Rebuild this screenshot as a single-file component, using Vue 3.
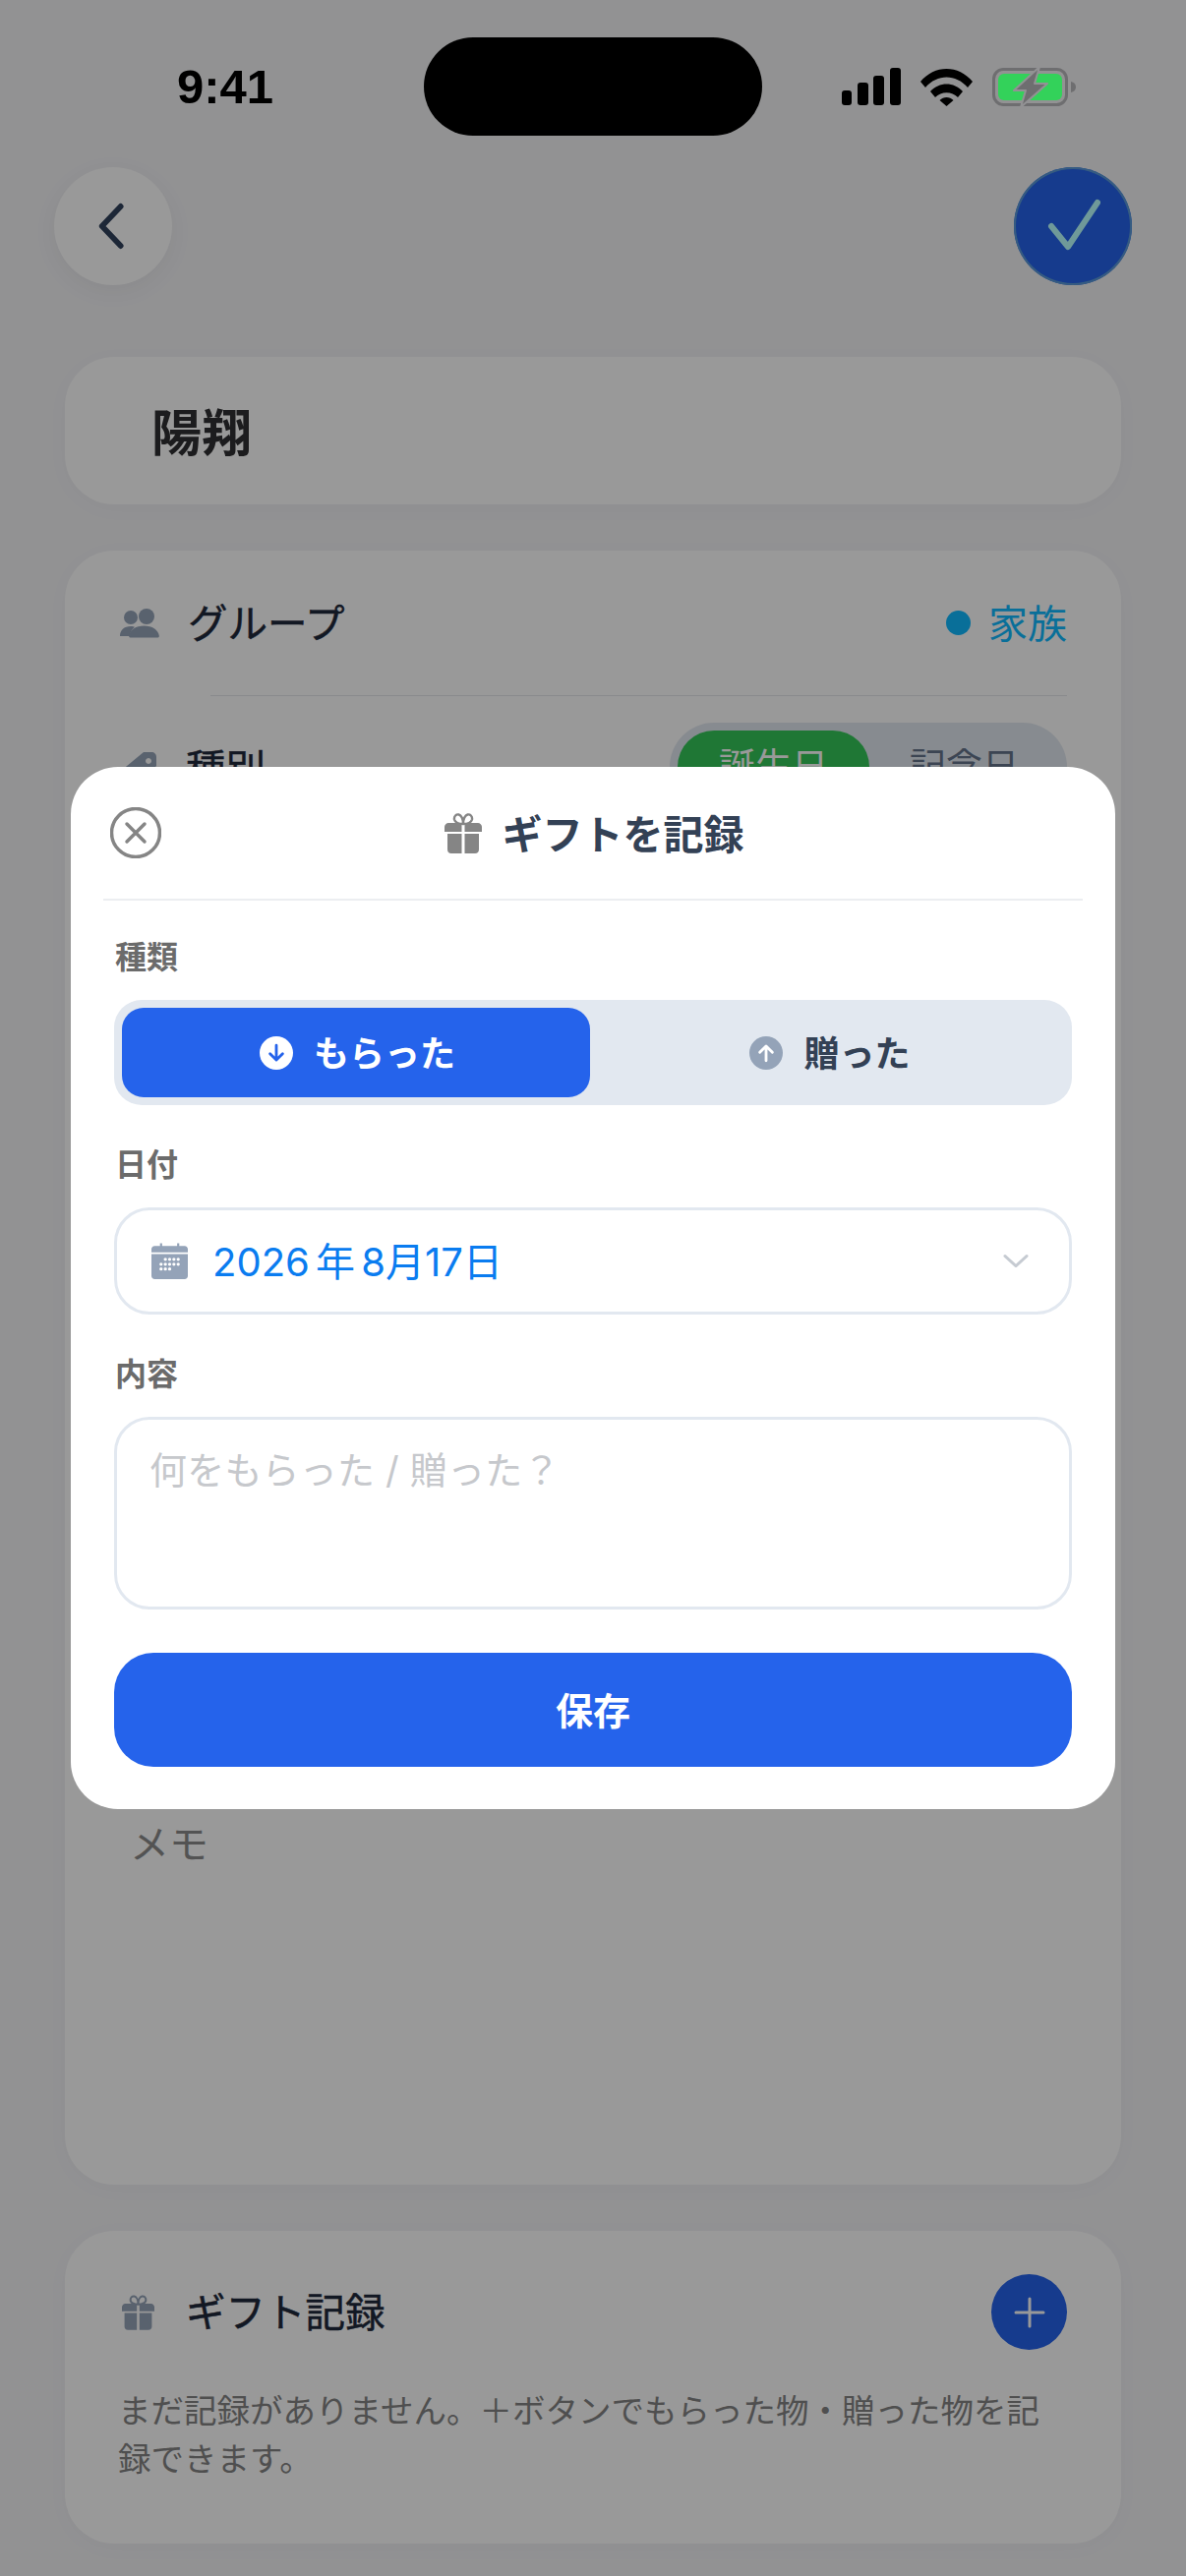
<script setup>
import { ref } from 'vue'

const giftType = ref('received')
const giftTypes = [
  { val: 'received', label: 'もらった', arrow: 'M12 6.5v10M7.5 12.5l4.5 4.5 4.5-4.5' },
  { val: 'sent', label: '贈った', arrow: 'M12 17.5v-10M7.5 11.5 12 7l4.5 4.5' }
]
const calendarDots = [
  [13, 15.5], [17, 15.5], [21, 15.5], [25, 15.5],
  [9, 20], [13, 20], [17, 20], [21, 20], [25, 20],
  [9, 24.5], [13, 24.5], [17, 24.5]
]
</script>

<template>
  <div class="phone">
    <div class="status">
      <span class="time">9:41</span>
      <div class="island"></div>
      <div class="status-icons">
        <svg width="60" height="38" viewBox="0 0 60 38">
          <rect x="0" y="23" width="10" height="15" rx="3" />
          <rect x="16" y="15" width="11" height="23" rx="3" />
          <rect x="32" y="8" width="11" height="30" rx="3" />
          <rect x="49" y="0" width="11" height="38" rx="3" />
        </svg>
        <svg width="53" height="39" viewBox="0 0 53 39">
          <path d="M0 14C14-3.500 39-3.500 53 14l-5 6C36 6 17 6 5 20z" />
          <path d="M10 24c9-10 24-10 33 0l-5 6c-6-6.500-17-6.500-23 0z" />
          <path d="M19.500 33c4-4 10-4 14 0l-7 6z" />
        </svg>
        <svg width="85" height="41" viewBox="0 0 85 41">
          <rect x="1.500" y="2.500" width="74" height="36" rx="10" fill="none" stroke="#6e6e70" stroke-width="3" />
          <rect x="6" y="7" width="65" height="27" rx="6" fill="#33d25a" />
          <path d="M80 15c3 .6 5 2.500 5 5.500s-2 4.900-5 5.500z" fill="#6e6e70" />
          <path d="M48 0 22 24h12l-5 17 27-24H43z" fill="#6e6e70" stroke="#929294" stroke-width="2" stroke-linejoin="round" />
        </svg>
      </div>
    </div>

    <div class="nav">
      <button class="nav-btn back">
        <svg width="30" height="48" viewBox="0 0 30 48">
          <path d="M26 4 6 24l0 0 20 20" transform="matrix(.95 0 0 1 1 0)" fill="none" stroke="#31415c" stroke-width="6" stroke-linecap="round" stroke-linejoin="round" />
        </svg>
      </button>
      <button class="nav-btn confirm">
        <svg width="56" height="56" viewBox="0 0 56 56">
          <path d="M6 28l17 21L53 4" fill="none" stroke="#b9ffff" stroke-width="6" stroke-linecap="round" stroke-linejoin="round" />
        </svg>
      </button>
    </div>

    <div class="cards">
      <div class="card name-card">陽翔</div>

      <div class="card detail-card">
        <div class="row">
          <svg class="row-icon" width="40" height="30" viewBox="0 0 40 30">
            <circle cx="11" cy="9" r="7" />
            <circle cx="27" cy="8" r="8" />
            <path d="M0 28c0-6 4-10 11-10 2 0 3 .3 4 .8-3 2.500-5 6-5 9.200z" />
            <path d="M13 30c-1 0-1.500-.8-1.300-2 1-6 7-10 15.300-10s14.300 4 15.300 10c.2 1.200-.3 2-1.300 2z" transform="translate(-2.500 -.500)" />
          </svg>
          <span class="row-label">グループ</span>
          <span class="group-value"><i class="dot"></i><span class="group-name">家族</span></span>
        </div>
        <div class="row-line"></div>
        <div class="row kind-row">
          <svg class="row-icon" width="38" height="38" viewBox="0 0 38 38">
            <path d="M24 2h8c3 0 5 2 5 5v9L17 36 1 21z M29 8a3 3 0 1 0 .01 0z" fill-rule="evenodd" />
          </svg>
          <span class="row-label">種別</span>
          <div class="kind-switch">
            <span class="kind active">誕生日</span>
            <span class="kind">記念日</span>
          </div>
        </div>
        <div class="memo">メモ</div>
      </div>

      <div class="card gift-card">
        <div class="gift-head">
          <svg class="row-icon" width="33" height="36" viewBox="0 0 38 41">
            <path d="M19 11C15 11 11 10 10 6.500 9.500 3 12 1 14.500 1.500 17 2 19 6 19 11zM19 11c4 0 8-1 9-4.500C28.500 3 26 1 23.500 1.500 21 2 19 6 19 11z" fill="none" stroke="currentColor" stroke-width="2.400" />
            <path d="M4 10h13.500v9H0v-5c0-2 2-4 4-4zM20.500 10H34c2 0 4 2 4 4v5H20.500zM3 21h14.500v20H7c-2.500 0-4-1.500-4-4zM20.500 21H35v16c0 2.500-1.500 4-4 4H20.500z" />
          </svg>
          <span class="row-label">ギフト記録</span>
          <button class="add-btn">
            <svg width="34" height="34" viewBox="0 0 34 34">
              <path d="M17 3v28M3 17h28" fill="none" stroke="#fff" stroke-width="3" stroke-linecap="round" />
            </svg>
          </button>
        </div>
        <p class="gift-empty">まだ記録がありません。＋ボタンでもらった物・贈った物を記録できます。</p>
      </div>
    </div>

    <div class="overlay">
      <div class="modal">
        <div class="modal-head">
          <button class="close">
            <svg width="52" height="52" viewBox="0 0 52 52">
              <circle cx="26" cy="26" r="24.500" fill="none" stroke="#858585" stroke-width="3.500" />
              <path d="M17 17l18 18M35 17 17 35" fill="none" stroke="#858585" stroke-width="3.500" stroke-linecap="round" />
            </svg>
          </button>
          <div class="modal-title">
            <svg width="38" height="41" viewBox="0 0 38 41" fill="#858585">
              <path d="M19 11C15 11 11 10 10 6.500 9.500 3 12 1 14.500 1.500 17 2 19 6 19 11zM19 11c4 0 8-1 9-4.500C28.500 3 26 1 23.500 1.500 21 2 19 6 19 11z" fill="none" stroke="#858585" stroke-width="2.400" />
              <path d="M4 10h13.500v9H0v-5c0-2 2-4 4-4zM20.500 10H34c2 0 4 2 4 4v5H20.500zM3 21h14.500v20H7c-2.500 0-4-1.500-4-4zM20.500 21H35v16c0 2.500-1.500 4-4 4H20.500z" />
            </svg>
            <span>ギフトを記録</span>
          </div>
        </div>

        <div class="modal-body">
          <div class="field-label first">種類</div>
          <div class="segment">
            <button
              v-for="t in giftTypes"
              :key="t.val"
              :class="['segment-item', { active: giftType === t.val }]"
              @click="giftType = t.val"
            >
              <svg class="segment-icon" width="34" height="34" viewBox="0 0 24 24">
                <circle cx="12" cy="12" r="12" class="segment-disc" />
                <path :d="t.arrow" class="segment-arrow" />
              </svg>
              <span>{{ t.label }}</span>
            </button>
          </div>

          <div class="field-label">日付</div>
          <div class="date-field">
            <svg width="37" height="37" viewBox="0 0 34 34" fill="#94a3b8">
              <path d="M3 3h5V0.500h2V3h14V0.500h2V3h5c1.700 0 3 1.300 3 3v3H0V6c0-1.700 1.300-3 3-3z" />
              <path d="M0 10.500h34V31c0 1.700-1.300 3-3 3H3c-1.700 0-3-1.300-3-3z" />
              <circle v-for="(d, i) in calendarDots" :key="i" :cx="d[0]" :cy="d[1]" r="1.500" fill="#fff" />
            </svg>
            <span class="date-text">2026 年 8月17日</span>
            <svg class="chevron" width="26" height="15" viewBox="0 0 28 15">
              <path d="M2 2l12 11L26 2" fill="none" stroke="#c6cbd2" stroke-width="3" stroke-linecap="round" stroke-linejoin="round" />
            </svg>
          </div>

          <div class="field-label">内容</div>
          <div class="memo-field">何をもらった / 贈った？</div>

          <button class="save">保存</button>
        </div>
      </div>
    </div>
  </div>
</template>

<style>
html, body {
  margin: 0;
  background: #f3f3f6;
}
</style>

<style scoped>
.phone {
  position: relative;
  width: 1206px;
  height: 2620px;
  overflow: hidden;
  background: #f3f3f6;
  font-family: Inter, "Noto Sans CJK JP", sans-serif;
  color: #1e293b;
}
button {
  border: 0;
  padding: 0;
  background: none;
  font: inherit;
}

.status {
  position: relative;
  z-index: 3;
  display: grid;
  grid-template-columns: 431px 344px 1fr;
  align-items: center;
  height: 100px;
  padding-top: 38px;
}
.time {
  padding-left: 180px;
  font-size: 49px;
  font-weight: 600;
  font-family: "Liberation Sans", sans-serif;
  color: #000;
}
.island {
  height: 100px;
  border-radius: 50px;
  background: #000;
}
.status-icons {
  display: flex;
  align-items: center;
  gap: 20px;
  padding-left: 81px;
}

.nav {
  display: flex;
  justify-content: space-between;
  padding: 32px 55px 0;
}
.nav-btn {
  display: flex;
  align-items: center;
  justify-content: center;
  width: 120px;
  height: 120px;
  border-radius: 50%;
}
.back {
  background: #fff;
  box-shadow: 0 6px 24px rgba(0, 0, 0, 0.05);
}
.back svg {
  margin-right: 6px;
}
.confirm {
  background: #2563eb;
  box-shadow: inset 0 0 0 2px #5b9ad8;
}

.cards {
  display: flex;
  flex-direction: column;
  gap: 47px;
  padding: 73px 66px 0;
}
.card {
  border-radius: 50px;
  background: #fff;
  box-shadow: 0 4px 30px rgba(0, 0, 0, 0.02);
}
.name-card {
  display: flex;
  align-items: center;
  height: 150px;
  padding: 0 0 3px 88px;
  box-sizing: border-box;
  font-size: 51px;
  font-weight: 700;
  color: #303032;
}
.detail-card {
  height: 1662px;
}
.row {
  display: flex;
  align-items: center;
  height: 147px;
  padding: 0 55px 0 56px;
}
.row-icon {
  flex: none;
  fill: #94a3b8;
  color: #94a3b8;
}
.row-label {
  margin-left: 29px;
  padding-bottom: 5px;
  font-size: 40.500px;
  -webkit-text-stroke: 0.5px #1e293b;
}
.group-value {
  display: flex;
  align-items: center;
  margin-left: auto;
  font-size: 40px;
  color: #10baff;
}
.group-name {
  padding-bottom: 4px;
}
.dot {
  width: 25px;
  height: 25px;
  margin-right: 18px;
  border-radius: 50%;
  background: #10baff;
}
.row-line {
  height: 1px;
  margin: 0 55px 0 148px;
  background: #e5e7eb;
}
.kind-switch {
  display: flex;
  align-self: flex-start;
  width: 404px;
  height: 90px;
  margin: 27px 0 0 auto;
  padding: 8px;
  box-sizing: border-box;
  border-radius: 45px;
  background: #e2e8f0;
  font-size: 37px;
  color: #64748b;
}
.kind {
  flex: 1;
  text-align: center;
  line-height: 74px;
}
.kind.active {
  flex: none;
  width: 195px;
  border-radius: 37px;
  background: #34c759;
  color: #fff;
}
.memo {
  margin: 993px 0 0 66px;
  font-size: 40px;
  line-height: 56px;
  color: #8b8b8b;
}

.gift-card {
  height: 318px;
  padding: 44px 55px 0 56px;
  box-sizing: border-box;
}
.gift-head {
  display: flex;
  align-items: center;
}
.gift-head .row-icon {
  margin-left: 2px;
  margin-right: 3px;
}
.add-btn {
  display: flex;
  align-items: center;
  justify-content: center;
  width: 77px;
  height: 77px;
  margin-left: auto;
  border-radius: 50%;
  background: #2563eb;
}
.gift-empty {
  margin: 38px 0 0 -2px;
  font-size: 33.500px;
  line-height: 49px;
  color: #848484;
}

.overlay {
  position: absolute;
  inset: 0;
  z-index: 2;
  display: flex;
  align-items: center;
  justify-content: center;
  background: rgba(0, 0, 0, 0.4);
}
.modal {
  width: 1062px;
  height: 1060px;
  border-radius: 48px;
  background: #fff;
}
.modal-head {
  position: relative;
  display: flex;
  align-items: center;
  justify-content: center;
  height: 134px;
  margin: 0 33px;
  border-bottom: 2px solid #eceef1;
}
.close {
  position: absolute;
  left: 7px;
  top: 41px;
  display: block;
  height: 52px;
}
.modal-title {
  display: flex;
  align-items: center;
  gap: 21px;
  padding-left: 2px;
  font-size: 41px;
  font-weight: 600;
  color: #334155;
}
.modal-title span {
  padding-bottom: 3px;
}
.modal-body {
  padding: 0 44px;
}
.field-label {
  margin: 39px 0 21px 1px;
  font-size: 32px;
  font-weight: 600;
  line-height: 44px;
  color: #6b6b6b;
}
.field-label.first {
  margin-top: 36px;
}
.segment {
  display: flex;
  height: 107px;
  padding: 8px;
  box-sizing: border-box;
  border-radius: 28px;
  background: #e2e8f0;
}
.segment-item {
  flex: 1;
  display: flex;
  align-items: center;
  justify-content: center;
  gap: 21px;
  padding-left: 6px;
  border-radius: 22px;
  font-size: 36px;
  font-weight: 600;
  color: #334155;
}
.segment-item span {
  padding-bottom: 3px;
}
.segment-item.active {
  flex: none;
  width: 476px;
  padding-left: 3px;
  background: #2563eb;
  color: #fff;
}
.segment-disc {
  fill: #94a3b8;
}
.segment-arrow {
  fill: none;
  stroke: #fff;
  stroke-width: 2;
  stroke-linecap: round;
  stroke-linejoin: round;
}
.active .segment-disc {
  fill: #fff;
}
.active .segment-arrow {
  stroke: #2563eb;
}
.date-field {
  display: flex;
  align-items: center;
  height: 109px;
  padding: 0 41px 0 35px;
  box-sizing: border-box;
  border: 3px solid #e2e8f0;
  border-radius: 36px;
}
.date-text {
  margin-left: 25px;
  padding-bottom: 3px;
  font-size: 40px;
  word-spacing: -5px;
  color: #0a7cf0;
}
.chevron {
  margin-left: auto;
}
.memo-field {
  height: 196px;
  padding: 23px 33px;
  box-sizing: border-box;
  border: 3px solid #e2e8f0;
  border-radius: 36px;
  font-size: 38px;
  letter-spacing: 0.2px;
  line-height: 56px;
  color: #c6c8cc;
}
.save {
  display: block;
  width: 100%;
  height: 116px;
  margin-top: 44px;
  padding-bottom: 3px;
  border-radius: 40px;
  background: #2563eb;
  font-size: 38px;
  font-weight: 600;
  color: #fff;
}
</style>
